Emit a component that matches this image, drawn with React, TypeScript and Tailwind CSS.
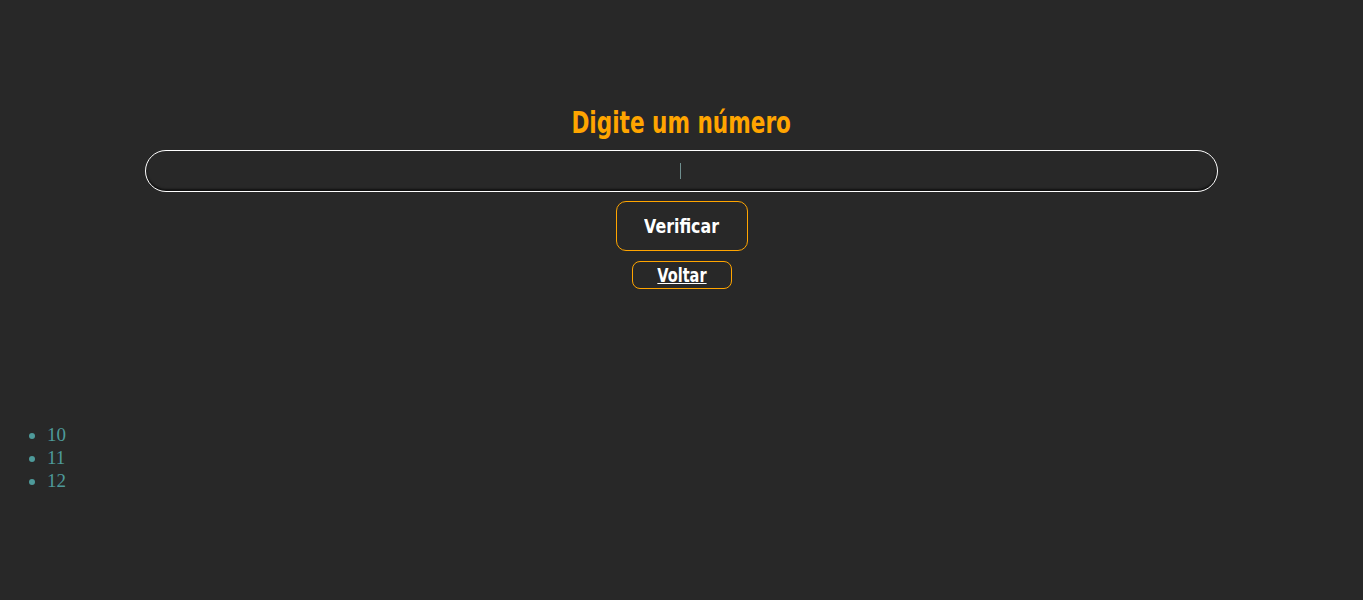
export default function App() {
  const impact = { fontFamily: "Impact, 'DejaVu Sans Condensed', sans-serif" };
  return (
    <main className="min-h-[600px] w-full bg-[#282828]">
      <section className="flex flex-col items-center pt-[104px]" style={impact}>
        <h1 className="scale-x-[0.8] text-[30px] leading-[38px] font-bold text-[#ffa500]">Digite um número</h1>
        <div className="relative mt-[8px]">
          <input
            type="number"
            className="block h-[42px] w-[1073px] rounded-[21px] border border-white bg-[#282828] text-center text-white shadow-[inset_0_-2px_2px_rgba(0,0,0,0.6)] outline-none"
          />
          <div className="absolute left-[535px] top-[13px] h-[16px] w-px bg-[#6f8f8f]" />
        </div>
        <button className="mt-[9px] h-[50px] w-[132px] rounded-[10px] border border-[#ffa500] text-[20px] font-bold text-white">
          <span className="inline-block scale-x-[0.88]">Verificar</span>
        </button>
        <a href="#" className="mt-[10px] flex h-[28px] w-[100px] items-center justify-center rounded-[8px] border border-[#ffa500] text-[19px] font-bold text-white underline">
          <span className="inline-block scale-x-[0.85]">Voltar</span>
        </a>
      </section>
      <ul className="mt-[134px] list-disc pl-[47px] text-[19px] leading-[23px] text-[#4e9a9a]" style={{ fontFamily: "'Liberation Serif', serif" }}>
        <li>10</li>
        <li>11</li>
        <li>12</li>
      </ul>
    </main>
  );
}
